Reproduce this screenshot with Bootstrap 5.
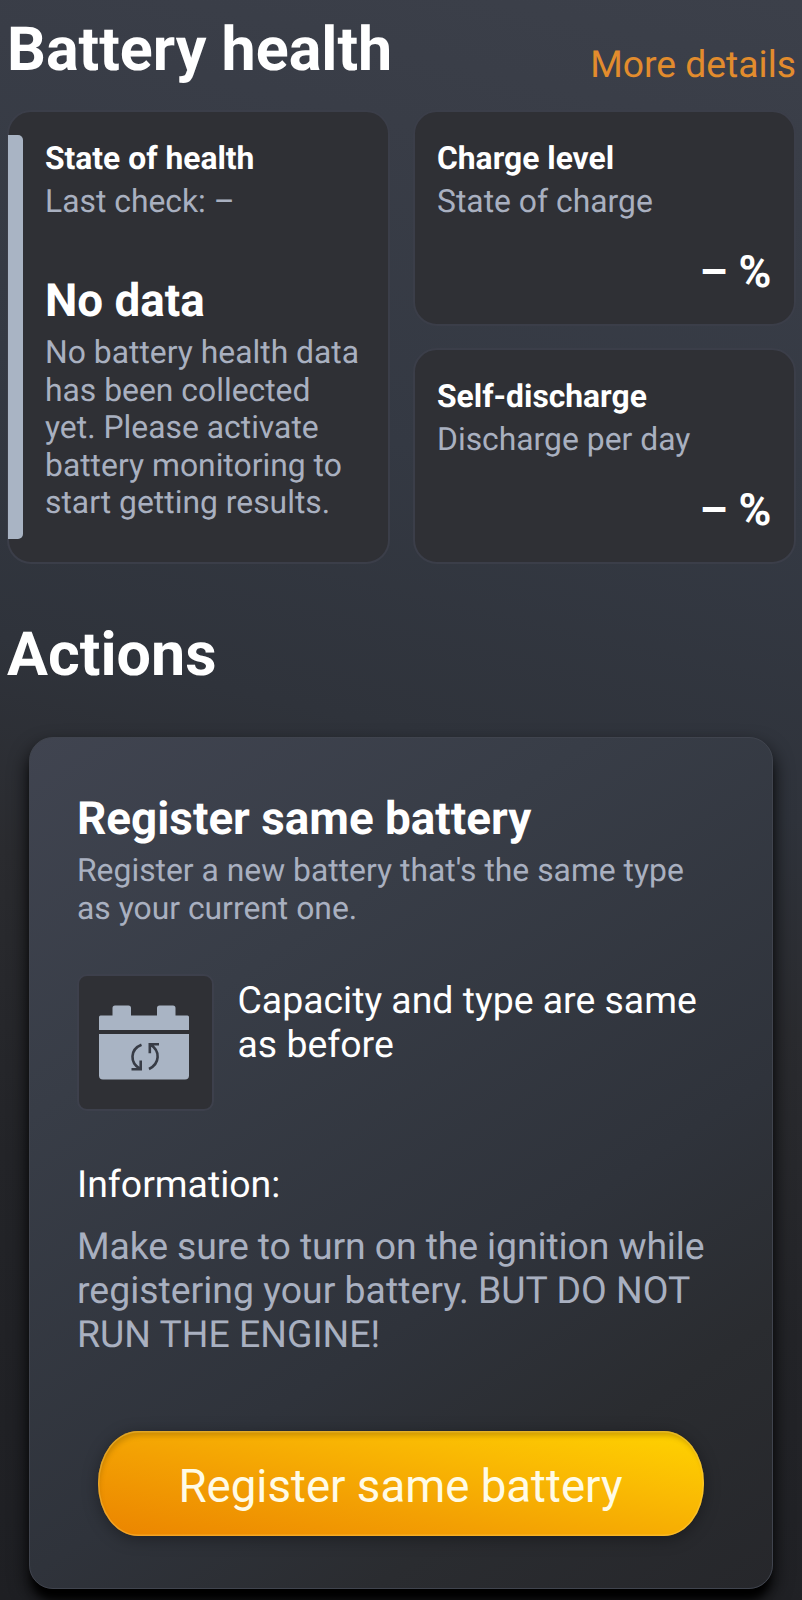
<!DOCTYPE html>
<html lang="en">
<head>
<meta charset="utf-8">
<meta name="viewport" content="width=device-width, initial-scale=1">
<title>Battery health</title>
<link rel="stylesheet" href="https://cdn.jsdelivr.net/npm/bootstrap@5.3.0/dist/css/bootstrap.min.css">
<style>
body{font-family:Roboto,"Liberation Sans",sans-serif;color:#fff;background:#1e1f23;width:802px;height:1600px;overflow:hidden;text-rendering:geometricPrecision}
.screen{height:1600px;padding:13px 6px 0 7px;background:linear-gradient(193deg,#3c404a 0%,#393d47 12%,#343943 30%,#2f333b 46%,#2a2b2f 58%,#232428 75%,#1e1f23 100%);overflow:hidden}
h1,h2,h3,p{margin:0}
.heading{font-size:61px;line-height:72px;font-weight:700}
.details-link{font-size:37.3px;line-height:44px;color:#e28c2d;margin-bottom:-1.5px}
.tiles{display:grid;grid-template-columns:383px 383px;grid-template-rows:215.5px 216px;gap:22.5px 23px}
.tile{background:#2f3035;border:2px solid #3b3e49;border-radius:24px;padding:27px 22.500px 0 22px}
.tile-tall{grid-row:span 2;padding-left:36px;padding-right:14px}
.level-bar{left:-1px;top:22.5px;width:15px;height:404.5px;background:#a9b4c4;border-radius:0 5px 5px 0}
.tile-title{font-size:31.8px;line-height:38px;font-weight:700}
.muted-text{font-size:31.85px;line-height:37.6px;color:#a9b0c0}
.big{font-size:45.8px;line-height:54px;font-weight:700}
.reading{font-size:44.5px}
.body-text{font-size:37.4px;line-height:44px}
.panel{margin:47px 23px 0 22px;height:851.5px;padding:55px 40px 0 47px;border:1px solid #40444e;border-radius:24px;background:linear-gradient(146deg,#404450 0%,#383d47 28%,#2f333b 62%,#2a2c30 80%,#26272b 100%);box-shadow:0 10px 18px 2px rgba(0,0,0,.7),0 14px 8px -4px #000}
.icon-box{width:137px;height:137px;background:#2f3035;border:2px solid #3d404c;border-radius:10px}
.action-btn{width:606px;height:105.5px;margin:74px 0 0 20.5px;border:0;border-radius:40px/52px;color:#fffbe6;font-size:45.6px;line-height:54px;background:linear-gradient(12deg,#eb8400 0%,#f3a003 38%,#fabb03 70%,#ffd400 100%);box-shadow:inset 0 0 0 1.5px rgba(255,205,90,.4),inset 2px 6px 5px -1px rgba(120,80,0,.32),0 3px 16px rgba(0,0,0,.35)}
</style>
</head>
<body>
<main class="screen">
  <header class="d-flex justify-content-between align-items-end" style="padding-bottom:25px">
    <h1 class="heading">Battery health</h1>
    <a class="details-link text-decoration-none" href="#">More details</a>
  </header>
  <section class="tiles">
    <div class="tile tile-tall position-relative">
      <div class="level-bar position-absolute"></div>
      <h3 class="tile-title">State of health</h3>
      <p class="muted-text" style="margin-top:6px">Last check: –</p>
      <h2 class="big" style="margin-top:54.5px">No data</h2>
      <p class="muted-text" style="margin-top:5px">No battery health data<br>has been collected<br>yet. Please activate<br>battery monitoring to<br>start getting results.</p>
    </div>
    <div class="tile">
      <h3 class="tile-title">Charge level</h3>
      <p class="muted-text" style="margin-top:6px">State of charge</p>
      <p class="big reading text-end" style="margin-top:24.5px">– %</p>
    </div>
    <div class="tile">
      <h3 class="tile-title">Self-discharge</h3>
      <p class="muted-text" style="margin-top:6px">Discharge per day</p>
      <p class="big reading text-end" style="margin-top:24.5px">– %</p>
    </div>
  </section>
  <h1 class="heading" style="margin-top:54px">Actions</h1>
  <section class="panel">
    <h2 class="big">Register same battery</h2>
    <p class="muted-text" style="margin-top:5px">Register a new battery that's the same type<br>as your current one.</p>
    <div class="d-flex" style="margin-top:46.5px">
      <div class="icon-box flex-shrink-0">
        <svg class="d-block" width="132" height="132" viewBox="79.500 975.500 132 132">
          <path fill="#a9b4c4" d="M99.5 1029.5V1016.5q0-1.500 1.500-1.500h12v-7.500q0-2.500 2.500-2.500h13.500q2.500 0 2.500 2.500v7.500h26v-7.500q0-2.500 2.500-2.500h13.500q2.500 0 2.500 2.500v7.500h12q1.500 0 1.500 1.500v13zM99.500 1033.500h90v41.500q0 4-4 4h-82q-4 0-4-4z"/>
          <g fill="none" stroke="#383c46" stroke-width="2.600">
            <path d="M142 1044.300C130.500 1049 130 1062 140.500 1068.300M132 1068.700h9.200v-8.700M149.500 1068.500C160.500 1063 161 1050.500 151 1044.200M159.500 1043.700h-9.200v9"/>
          </g>
        </svg>
      </div>
      <p class="body-text" style="margin:5.5px 0 0 23.5px">Capacity and type are same<br>as before</p>
    </div>
    <p class="body-text" style="margin-top:52px">Information:</p>
    <p class="body-text" style="margin-top:18px;color:#a9b0c0"><span style="letter-spacing:-.12px">Make sure to turn on the ignition while</span><br>registering your battery. BUT DO NOT<br>RUN THE ENGINE!</p>
    <button class="action-btn d-block px-0 pb-0 pt-2" type="button">Register same battery</button>
  </section>
</main>
<script src="https://cdn.jsdelivr.net/npm/bootstrap@5.3.0/dist/js/bootstrap.bundle.min.js"></script>
</body>
</html>
